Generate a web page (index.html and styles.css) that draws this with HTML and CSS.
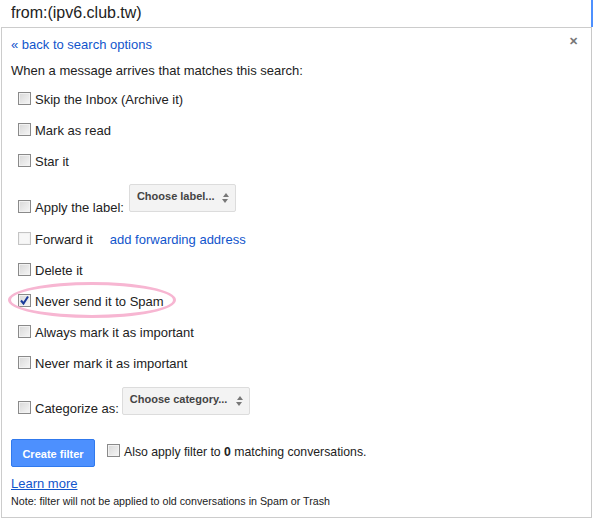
FILE: index.html
```html
<!DOCTYPE html>
<html>
<head>
<meta charset="utf-8">
<link rel="stylesheet" href="styles.css">
</head>
<body>
<div class="search">
  <div class="search-text">from:(ipv6.club.tw)</div>
</div>
<div class="panel">
  <div class="close">&#x2715;</div>
  <a class="back" href="#">« back to search options</a>
  <div class="intro">When a message arrives that matches this search:</div>
  <div class="row"><span class="cb"></span><span>Skip the Inbox (Archive it)</span></div>
  <div class="row"><span class="cb"></span><span>Mark as read</span></div>
  <div class="row"><span class="cb"></span><span>Star it</span></div>
  <div class="row row-select row-label">
    <span class="cb"></span><span class="lbl">Apply the label:</span>
    <span class="select sel-label">Choose label...<span class="arrows"></span></span>
  </div>
  <div class="row"><span class="cb cb-disabled"></span><span>Forward it</span><a class="fwd" href="#">add forwarding address</a></div>
  <div class="row"><span class="cb"></span><span>Delete it</span></div>
  <div class="row row-spam">
    <span class="cb cb-checked"><svg width="11" height="11" viewBox="0 0 11 11"><path d="M2 5.5 L4.5 8.5 L9 1.5" fill="none" stroke="#1a3a9a" stroke-width="2"/></svg></span><span>Never send it to Spam</span>
    <span class="ring"></span>
  </div>
  <div class="row"><span class="cb"></span><span>Always mark it as important</span></div>
  <div class="row"><span class="cb"></span><span>Never mark it as important</span></div>
  <div class="row row-select row-cat">
    <span class="cb"></span><span class="lbl">Categorize as:</span>
    <span class="select sel-cat">Choose category...<span class="arrows"></span></span>
  </div>
  <div class="actions">
    <span class="btn">Create filter</span>
    <span class="cb"></span><span class="also">Also apply filter to <b>0</b> matching conversations.</span>
  </div>
  <a class="learn" href="#">Learn more</a>
  <div class="note">Note: filter will not be applied to old conversations in Spam or Trash</div>
</div>
</body>
</html>
```
FILE: styles.css
```css
html, body {
  margin: 0;
  padding: 0;
  background: #fff;
}
body {
  width: 593px;
  height: 519px;
  font-family: "Liberation Sans", Arial, sans-serif;
  font-size: 13px;
  color: #222;
  position: relative;
  overflow: hidden;
}
.search {
  height: 27px;
  box-sizing: border-box;
  border-right: 2px solid #4d90fe;
  display: flex;
  align-items: center;
  padding-left: 11px;
}
.search-text {
  font-size: 16px;
  color: #222;
  margin-top: -1px;
}
.panel {
  position: relative;
  margin-left: 1px;
  width: 591px;
  height: 491px;
  box-sizing: border-box;
  border: 1px solid #ccc;
  border-right-color: #c8c8c8;
  padding: 9px 0 0 9px;
  background: #fff;
}
.close {
  position: absolute;
  right: 13px;
  top: 7px;
  font-size: 11px;
  font-weight: bold;
  color: #777;
}
.back {
  display: block;
  color: #15c;
  text-decoration: none;
  height: 16px;
  line-height: 16px;
}
.intro {
  margin-top: 10px;
  height: 16px;
  line-height: 16px;
}
.row {
  position: relative;
  height: 31px;
  display: flex;
  align-items: center;
  padding-left: 7px;
}
.intro + .row {
  margin-top: 5px;
}
.cb {
  width: 11px;
  height: 11px;
  border: 1px solid #8a8a8a;
  background: linear-gradient(135deg, #d8d8d8, #f6f6f6);
  box-shadow: inset 0 0 0 1px #f2f2f2;
  margin-right: 4px;
  margin-top: -2px;
  flex: none;
  display: flex;
  align-items: center;
  justify-content: center;
}
.cb-disabled {
  border-color: #c4c4c4;
  background: #f7f7f7;
}
.cb-checked svg {
  display: block;
}
.row-select {
  height: 47px;
  align-items: flex-end;
  padding-bottom: 9px;
  box-sizing: border-box;
}
.row-select .cb {
  margin-bottom: 2px;
}
.lbl {
  margin-right: 5px;
}
.select {
  position: relative;
  align-self: flex-start;
  margin-top: 7px;
  height: 28px;
  box-sizing: border-box;
  border: 1px solid #dcdcdc;
  border-radius: 2px;
  background: #f3f3f3;
  font-size: 11px;
  font-weight: bold;
  color: #444;
  padding: 0 18px 4px 7px;
  display: flex;
  align-items: center;
  white-space: nowrap;
}
.sel-label {
  width: 107px;
}
.sel-cat {
  width: 128px;
  margin-top: 8px;
  margin-left: -2px;
}
.row-cat {
  height: 45px;
  padding-bottom: 8px;
}
.arrows {
  position: absolute;
  right: 6px;
  top: 8px;
  width: 0;
  height: 0;
  border-left: 3.5px solid transparent;
  border-right: 3.5px solid transparent;
  border-bottom: 4px solid #777;
}
.arrows::after {
  content: "";
  position: absolute;
  left: -3.5px;
  top: 6px;
  border-left: 3.5px solid transparent;
  border-right: 3.5px solid transparent;
  border-top: 4px solid #777;
}
.fwd {
  color: #15c;
  text-decoration: none;
  margin-left: 17px;
}
.ring {
  position: absolute;
  left: -3px;
  top: -4px;
  width: 162px;
  height: 30px;
  border: 3px solid #f7b6d2;
  border-radius: 50%;
  pointer-events: none;
}
.actions {
  margin-top: 15px;
  display: flex;
  align-items: center;
  height: 28px;
}
.btn {
  width: 84px;
  height: 28px;
  box-sizing: border-box;
  background: #4d90fe;
  border: 1px solid #3079ed;
  border-radius: 2px;
  color: #fff;
  font-size: 11px;
  font-weight: bold;
  display: flex;
  align-items: center;
  justify-content: center;
  margin-right: 12px;
  padding-top: 1px;
}
.actions .cb {
  margin-top: -5px;
}
.also {
  margin-top: -3px;
  font-size: 12.25px;
}
.learn {
  display: block;
  margin-top: 9px;
  color: #15c;
  text-decoration: underline;
  height: 16px;
  line-height: 16px;
}
.note {
  margin-top: 3px;
  font-size: 10.7px;
  color: #222;
}
```
